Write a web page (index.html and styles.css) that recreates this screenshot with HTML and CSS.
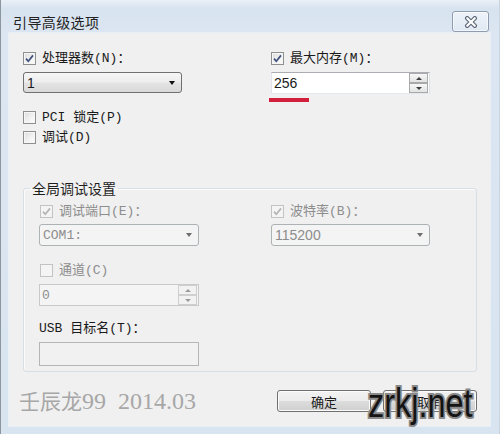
FILE: index.html
```html
<!DOCTYPE html>
<html lang="zh-CN">
<head>
<meta charset="utf-8">
<title>引导高级选项</title>
<link rel="stylesheet" href="styles.css">
</head>
<body>
<div class="window">
  <div class="titlebar">
    <span class="title">引导高级选项</span>
    <button class="close" aria-label="关闭">
      <svg width="14" height="12" viewBox="0 0 14 12"><path d="M3.2 2.2 L10.8 9.8 M10.8 2.2 L3.2 9.8" stroke="#5b6575" stroke-width="4.4" stroke-linecap="round" fill="none"/><path d="M3.2 2.2 L10.8 9.8 M10.8 2.2 L3.2 9.8" stroke="#ffffff" stroke-width="2.2" stroke-linecap="round" fill="none"/></svg>
    </button>
  </div>
  <div class="content">
    <div class="top">
      <div class="col">
        <label class="check"><span class="cb"><svg width="11" height="11" viewBox="0 0 11 11"><path d="M2 5.6 L4.3 8.2 L9 2.4" stroke="#3e4f7c" stroke-width="1.7" fill="none"/></svg></span>处理器数(N)：</label>
        <div class="combo"><span class="sans">1</span><span class="arrow"></span></div>
        <label class="check gap-lg"><span class="cb"></span>PCI 锁定(P)</label>
        <label class="check gap-sm"><span class="cb"></span>调试(D)</label>
      </div>
      <div class="col">
        <label class="check"><span class="cb"><svg width="11" height="11" viewBox="0 0 11 11"><path d="M2 5.6 L4.3 8.2 L9 2.4" stroke="#3e4f7c" stroke-width="1.7" fill="none"/></svg></span>最大内存(M)：</label>
        <div class="spin"><span class="sans">256</span><span class="sbtns"><span class="sb"><span class="up"></span></span><span class="sb"><span class="down"></span></span></span></div>
        <div class="redline"></div>
      </div>
    </div>

    <fieldset class="group">
      <legend>全局调试设置</legend>
      <div class="ggrid">
        <div class="col">
          <label class="check dis ind"><span class="cb"><svg width="11" height="11" viewBox="0 0 11 11"><path d="M2 5.6 L4.3 8.2 L9 2.4" stroke="#b4b4b4" stroke-width="1.7" fill="none"/></svg></span>调试端口(E)：</label>
          <div class="combo dis g6"><span>COM1:</span><span class="arrow"></span></div>
          <label class="check dis ind gap-lg"><span class="cb"></span>通道(C)</label>
          <div class="spin dis g6"><span>0</span><span class="sbtns"><span class="sb"><span class="up"></span></span><span class="sb"><span class="down"></span></span></span></div>
          <div class="label">USB 目标名(T)：</div>
          <div class="textbox"></div>
        </div>
        <div class="col">
          <label class="check dis"><span class="cb"><svg width="11" height="11" viewBox="0 0 11 11"><path d="M2 5.6 L4.3 8.2 L9 2.4" stroke="#b4b4b4" stroke-width="1.7" fill="none"/></svg></span>波特率(B)：</label>
          <div class="combo dis g6"><span class="sans">115200</span><span class="arrow"></span></div>
        </div>
      </div>
    </fieldset>

    <div class="footer">
      <span class="wm"><span class="wm-cjk">壬辰龙</span>99  2014.03</span>
      <div class="buttons">
        <button class="btn">确定</button>
        <button class="btn">取消</button>
      </div>
    </div>
  </div>
  <div class="zrkj">zrkj.net</div>
</div>
</body>
</html>
```

FILE: styles.css
```css
html, body {
  margin: 0;
  padding: 0;
  background: #dae5f1;
}

body {
  font-family: "Liberation Mono", "Noto Sans CJK SC", monospace;
  font-size: 13px;
  color: #1a1a1a;
}

.window {
  position: relative;
  width: 500px;
  height: 434px;
  box-sizing: border-box;
  display: flex;
  flex-direction: column;
  background: linear-gradient(#eaf0f7 0, #d8e3f0 8px, #dbe6f2 34px, #d9e4f1 100%);
  box-shadow: inset 1px 0 #8d959f, inset -1px 0 #c9d4e0;
  overflow: hidden;
}

.titlebar {
  height: 33px;
  flex: none;
  display: flex;
  align-items: flex-start;
  justify-content: space-between;
  padding: 0 11px 0 13px;
  box-sizing: border-box;
}

.title {
  margin-top: 14px;
  font-family: "Noto Sans CJK SC", sans-serif;
  font-size: 14px;
  line-height: 16px;
  letter-spacing: 0.4px;
  color: #222;
}

.close {
  margin-top: 11px;
  width: 37px;
  height: 21px;
  padding: 0;
  box-sizing: border-box;
  border: 1px solid #8f9cb0;
  border-radius: 3px;
  background: linear-gradient(rgba(255,255,255,0.55), rgba(235,240,247,0.3));
  box-shadow: inset 0 0 0 1px rgba(255,255,255,0.6);
  display: flex;
  align-items: center;
  justify-content: center;
}

.content {
  flex: 1;
  margin: 0 10px 9px 9px;
  background: #f0f0f0;
  padding: 19px 13px 14px 14px;
  box-sizing: border-box;
  display: flex;
  flex-direction: column;
  box-shadow: 0 0 0 1px #e9eff6;
}

.top {
  display: grid;
  grid-template-columns: 159px 159px;
  column-gap: 89px;
}

.col {
  display: flex;
  flex-direction: column;
  align-items: flex-start;
}

.check {
  display: flex;
  align-items: center;
  gap: 6px;
  height: 13px;
  line-height: 13px;
  white-space: nowrap;
}

.check.ind { margin-left: 1px; }
.gap-lg { margin-top: 18px; }
.gap-sm { margin-top: 7px; }

.cb {
  flex: none;
  width: 13px;
  height: 13px;
  box-sizing: border-box;
  border: 1px solid #8e8f8f;
  background: linear-gradient(135deg, #dcdcdc 0%, #f3f3f3 60%, #fdfdfd 100%);
  box-shadow: inset 0 0 0 1px #f6f6f6;
  display: flex;
  align-items: center;
  justify-content: center;
}

.dis { color: #8d8d8d; }

.dis .cb {
  border-color: #c3c3c3;
  background: #f4f4f4;
  box-shadow: none;
}

.sans {
  font-family: "Liberation Sans", "Noto Sans CJK SC", sans-serif;
  font-size: 14px;
}

.combo {
  margin-top: 7px;
  width: 159px;
  height: 21px;
  box-sizing: border-box;
  border: 1px solid #707070;
  border-radius: 3px;
  background: linear-gradient(#f6f6f6 0%, #eeeeee 45%, #e3e3e3 55%, #d9d9d9 100%);
  display: flex;
  align-items: center;
  justify-content: space-between;
  padding: 0 6px 0 3px;
}

.combo.dis {
  border-color: #adb2b5;
  background: #f4f4f4;
}

.g6 { margin-top: 6px; height: 22px; }
.combo.g6 { width: 160px; }
.ggrid .col:last-child .combo.g6 { width: 159px; }

.arrow {
  width: 0;
  height: 0;
  border-left: 3.5px solid transparent;
  border-right: 3.5px solid transparent;
  border-top: 4px solid #111;
}

.dis .arrow { border-top-color: #6f6f6f; }

.spin {
  margin-top: 7px;
  width: 159px;
  height: 22px;
  box-sizing: border-box;
  border: 1px solid;
  border-color: #abadb3 #dbdfe6 #e3e9ef #e2e3ea;
  background: #fff;
  display: flex;
  align-items: center;
  padding: 0 1px 0 2px;
}

.spin.dis {
  width: 160px;
  border-color: #c9c9c9;
  background: #f4f4f4;
}

.sbtns {
  margin-left: auto;
  width: 19px;
  height: 20px;
  display: flex;
  flex-direction: column;
}

.sb {
  flex: 1;
  box-sizing: border-box;
  border: 1px solid #a9a9a9;
  background: linear-gradient(#f7f7f7, #e3e3e3);
  display: flex;
  align-items: center;
  justify-content: center;
}

.dis .sb {
  border-color: #cfcfcf;
  background: #f2f2f2;
}

.up, .down {
  width: 0;
  height: 0;
  border-left: 3px solid transparent;
  border-right: 3px solid transparent;
}

.up { border-bottom: 3px solid #3d3d3d; }
.down { border-top: 3px solid #3d3d3d; }
.dis .up { border-bottom-color: #9a9a9a; }
.dis .down { border-top-color: #9a9a9a; }

.redline {
  margin-top: 4px;
  margin-left: -2px;
  width: 40px;
  height: 4px;
  background: #d21f3c;
}

.group {
  margin: 36px 0 0;
  padding: 9px 15px 5px;
  border: 1px solid #d5dfe5;
  border-radius: 3px;
  min-width: 0;
  box-shadow: inset 1px 1px #fbfbfb;
}

.group legend {
  margin-left: -9px;
  padding: 0 2px;
  font-family: "Noto Sans CJK SC", sans-serif;
  font-size: 14px;
  line-height: 16px;
  color: #1e1e1e;
}

.ggrid {
  display: grid;
  grid-template-columns: 160px 159px;
  column-gap: 72px;
}

.label {
  margin-top: 16px;
  height: 13px;
  line-height: 13px;
  white-space: nowrap;
}

.textbox {
  margin-top: 7px;
  width: 160px;
  height: 24px;
  box-sizing: border-box;
  border: 1px solid #b5b5b5;
  background: #f1f1f1;
}

.footer {
  margin-top: 18px;
  height: 22px;
  display: flex;
  align-items: center;
  justify-content: space-between;
}

.wm {
  margin-left: -4px;
  font-family: "Liberation Serif", "Noto Sans CJK SC", serif;
  font-size: 24px;
  line-height: 24px;
  color: #a7a7a7;
  white-space: pre;
}

.wm-cjk {
  font-size: 21px;
}

.buttons {
  display: flex;
  gap: 12px;
}

.btn {
  width: 94px;
  height: 22px;
  padding: 0;
  box-sizing: border-box;
  border: 1px solid #707070;
  border-radius: 3px;
  background: linear-gradient(#f2f2f2 0%, #ebebeb 50%, #dddddd 50%, #cfcfcf 100%);
  box-shadow: inset 0 0 0 1px #fbfbfb;
  font-family: "Noto Sans CJK SC", sans-serif;
  font-size: 13px;
  color: #1a1a1a;
}

.zrkj {
  position: absolute;
  left: 368px;
  top: 383px;
  font-family: "Liberation Sans", sans-serif;
  font-size: 40px;
  line-height: 40px;
  color: #141414;
  -webkit-text-stroke: 4px #8a8a8a;
  paint-order: stroke fill;
  transform: scaleX(0.81);
  transform-origin: left top;
  white-space: nowrap;
}
```
